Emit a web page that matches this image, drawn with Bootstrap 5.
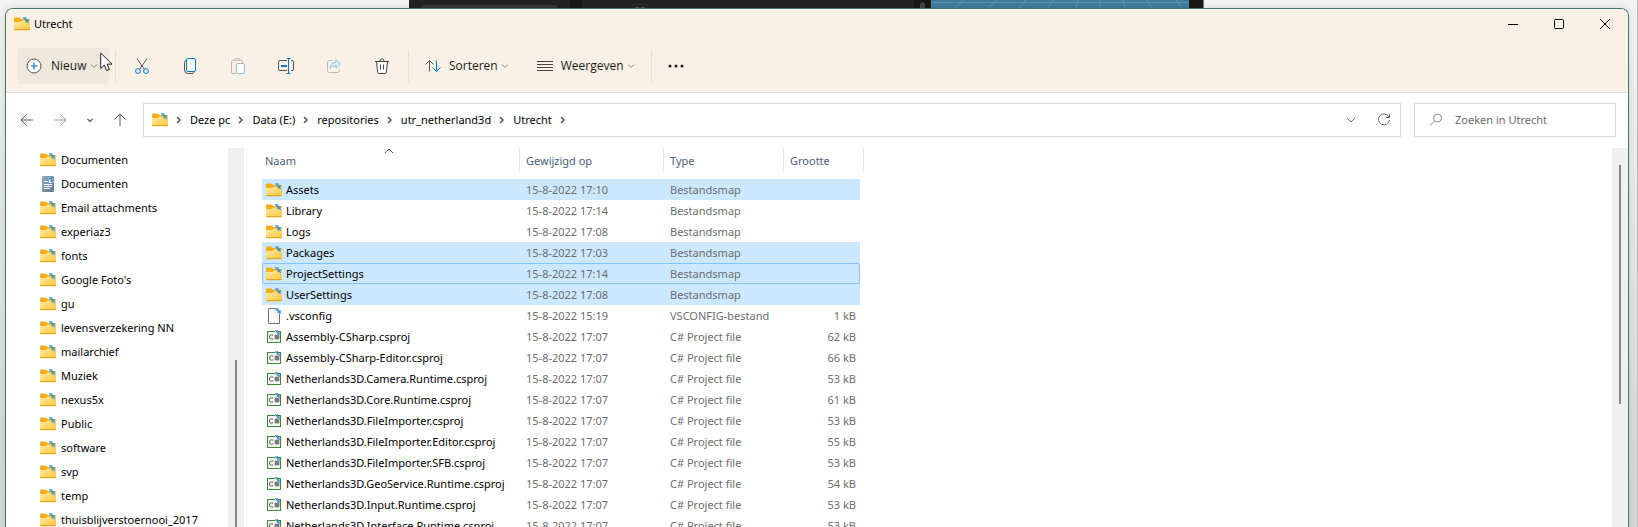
<!DOCTYPE html>
<html lang="nl">
<head>
<meta charset="utf-8">
<meta name="viewport" content="width=device-width, initial-scale=1">
<title>Utrecht</title>
<link href="https://cdn.jsdelivr.net/npm/bootstrap@5.3.0/dist/css/bootstrap.min.css" rel="stylesheet">
<style>
  body { font-family: "Noto Sans", "Open Sans", sans-serif; font-size: 11px; line-height: 16px; color: #000; background: linear-gradient(#f3f3f3, #d6d6d6); }
  svg { display: block; flex: none; }
  button, input { font: inherit; }
  .desktop { border-right: 1px solid #bdbdbd; padding: 0 8px 0 5px; }
  .behind { position: absolute; top: 0; left: 25%; width: 795px; height: 9px; }
  .explorer { position: relative; margin-top: 8px; background: #fff; border: 1px solid #47796b; border-bottom: 0; border-radius: 8px 8px 0 0; box-shadow: 0 0 8px rgba(0,0,0,.12); min-height: 0; }
  .chrome { background: #f9f1e5; border-bottom: 1px solid #e5ddd2; border-radius: 7px 7px 0 0; height: 84px; }
  .titlebar { height: 29px; padding-left: 8px; }
  .titlebar .caption-btn { width: 46px; height: 28px; }
  .tool-row { padding: 10px 11px; font-family: "Open Sans", sans-serif; font-size: 12px; }
  .plain { border: 0; background: none; padding: 0; color: #1b1b1b; display: flex; align-items: center; justify-content: center; }
  .new-btn { width: 92px; height: 36px; padding-left: 9px; border-radius: 4px; background: #efe8dd; gap: 9px; justify-content: flex-start; }
  .icon-btn { width: 48px; height: 36px; }
  .menu-btn { height: 36px; gap: 8px; }
  .menu-btn + .menu-btn { margin-left: 28px; }
  .chev { color: #8d8880; margin-left: -5px; }
  .rule-v { width: 1px; height: 31px; background: #e8e0d5; }
  .rule-a { margin: 0 2px 0 6px; }
  .rule-b { margin: 0 16px 0 2px; }
  .address-row { padding: 10px 12px 11px 10px; gap: 13px; }
  .nav-set { width: 114px; padding-left: 4px; gap: 19px; }
  .path-box, .find-box { height: 34px; border: 1px solid #d9d9d9; }
  .path-box { padding: 0 9px 0 8px; }
  .path-box a { color: #000; text-decoration: none; }
  .path-tools { gap: 21px; }
  .crumbs li { display: flex; align-items: center; }
  .crumbs .sep { margin: 0 8px; }
  .find-box { width: 202px; padding-left: 14px; gap: 12px; }
  .find-box input { border: 0; outline: 0; padding: 0; width: 140px; color: #6b6b6b; }
  .find-box input::placeholder { color: #6b6b6b; opacity: 1; }
  .panes { min-height: 0; }
  .tree { width: 222px; overflow: hidden; }
  .tree a { height: 24px; padding-left: 34px; gap: 5px; color: #000; text-decoration: none; white-space: nowrap; }
  .track { width: 16px; background: #f0f0f0; flex: none; position: relative; }
  .thumb { position: absolute; left: 7px; width: 2px; background: #868686; }
  .splitter { width: 1px; margin: 0 15px 0 2px; background: #f5f5f5; flex: none; }
  .files { width: 598px; table-layout: fixed; border-collapse: separate; border-spacing: 0; color: #6d6d6d; }
  .files th { position: relative; height: 31px; padding: 5px 0 0 7px; vertical-align: top; font-weight: 400; color: #4c607a; }
  .files th::after { content: ""; position: absolute; top: 0; right: -1px; width: 1px; height: 25px; background: #e5e5e5; }
  .files th:first-child { padding-left: 3px; }
  .files th:last-child::after { right: -4px; }
  .files th svg { position: absolute; top: 0; left: 122px; }
  .files td { height: 21px; padding: 0 4px 0 7px; white-space: nowrap; }
  .files td:first-child { padding-left: 4px; }
  .files td:last-child { text-align: right; }
  .files .entry { display: flex; align-items: center; gap: 4px; color: #000; }
  .files .picked td { background: #cce8ff; }
  .files .focused { outline: 1px solid #83c5fb; outline-offset: -1px; border-radius: 2px; }
  .pointer { position: absolute; left: 94px; top: 43px; }
</style>
</head>
<body>
<svg width="0" height="0" class="position-absolute" aria-hidden="true">
  <defs>
    <linearGradient id="gold" x1="0" y1="0" x2="1" y2="1"><stop offset="0" stop-color="#ffeaa6"/><stop offset="1" stop-color="#fdc635"/></linearGradient>
    <linearGradient id="slate" x1="0" y1="0" x2="1" y2="1"><stop offset="0" stop-color="#95abc2"/><stop offset="1" stop-color="#5b7997"/></linearGradient>
    <symbol id="sync" viewBox="0 0 7 7"><path d="M0 0h3v3H0zM4 4h3v3H4z" fill="#a9d8f2"/><path d="M1 0l2 2V0h1v3H1V2h1L0 1zM6 7L4 5v1H3V3h4v1H5l2 2z" fill="#2f86bd"/></symbol>
    <symbol id="folder" viewBox="0 0 16 16"><path d="M0 2.500q0-1 1-1h4.500l2 1.500H15q1 0 1 1V8H0z" fill="#f5ae13"/><path d="M0 6h6l2-1.500h8V13q0 1-1 1H1q-1 0-1-1z" fill="url(#gold)"/><path d="M0 13q0 1.300 1 1.300h14q1 0 1-1.300z" fill="#e8a61c"/><use href="#sync" x="9" y="1" width="6" height="6"/></symbol>
    <symbol id="doc" viewBox="0 0 16 16"><rect x="2" width="12" height="16" rx="1" fill="url(#slate)"/><path d="M4 5.500h4M4 8.500h8M4 10.500h8M4 12.500h6" stroke="#fff"/><path d="M9 3h4v4H9z" fill="#fff"/><use href="#sync" x="8" y="1" width="6" height="6"/></symbol>
    <symbol id="blank" viewBox="0 0 16 16"><path d="M2.500.5h8l3 3v12h-11z" fill="#fafafa" stroke="#707070"/><use href="#sync" x="9" y="0" width="6" height="6"/></symbol>
    <symbol id="csproj" viewBox="0 0 16 16"><rect x="1.500" y="2.500" width="13" height="11" fill="#f5f5f5" stroke="#388a34"/><path d="M7.200 6.200Q3.500 5 3.500 8t3.700 1.800M10 5.500v5M12 5.500v5M8.500 7h5M8.500 9h5" fill="none" stroke="#444" stroke-width=".9"/><use href="#sync" x="9" y="1" width="5" height="5"/></symbol>
    <symbol id="down" viewBox="0 0 8 8"><path d="M1 2.500l3 3 3-3" fill="none" stroke="currentColor"/></symbol>
    <symbol id="right" viewBox="0 0 6 8"><path d="M1 1l3 3-3 3" fill="none" stroke="#555" stroke-width="1.500"/></symbol>
  </defs>
</svg>

<div class="desktop vh-100 d-flex flex-column overflow-hidden position-relative">
  <!-- Strip of the editor window that sticks out above the explorer -->
  <svg class="behind" viewBox="0 0 795 9" aria-hidden="true">
    <path fill="#232323" d="M0 0h795v9H0z"/><rect x="12" y="5" width="136" height="6" rx="2" fill="#383838"/>
    <path fill="#191919" d="M161 0h12v9h-12zM505 0h16v9h-16zM780 0h14v9h-14z"/><path d="M226 7.500h4m2 0h4" stroke="#555"/>
    <rect x="511" y="2" width="5" height="9" rx="2.500" fill="#444"/>
    <path fill="#417da0" d="M522 0h258v9H522z"/>
    <path d="M522 2.500h258M555 0l-11 9M588 0l-10 9M617 0l-8 9M644 0l-6 9M669 0l-2 9M691 0v9M714 0l2 9M738 0l5 9M767 0l6 9" stroke="#6b9cb8" stroke-opacity=".7" fill="none"/>
    <path fill="#777" d="M794 0h1v9h-1z"/>
  </svg>

  <main class="explorer flex-grow-1 d-flex flex-column">
    <header class="chrome">
      <div class="titlebar d-flex align-items-center">
        <svg width="16" height="16"><use href="#folder"/></svg>
        <span class="ms-1">Utrecht</span>
        <div class="ms-auto d-flex">
          <button class="plain caption-btn" aria-label="Minimaliseren"><svg width="10" height="10"><path d="M0 5.500h10" stroke="#000"/></svg></button>
          <button class="plain caption-btn" aria-label="Maximaliseren"><svg width="10" height="10"><rect x=".5" y=".5" width="9" height="9" rx="1" fill="none" stroke="#000"/></svg></button>
          <button class="plain caption-btn" aria-label="Sluiten"><svg width="10" height="10"><path d="M0 0l10 10M10 0L0 10" stroke="#000"/></svg></button>
        </div>
      </div>
      <div class="tool-row d-flex align-items-center">
        <button class="plain new-btn">
          <svg width="16" height="16" fill="none"><circle cx="8" cy="8" r="7" fill="#fff" stroke="#555"/><path d="M8 4.500v7M4.500 8h7" stroke="#0078d4" stroke-width="1.200"/></svg>
          <span>Nieuw</span>
          <svg class="chev" width="8" height="8"><use href="#down"/></svg>
        </button>
        <span class="rule-v rule-a"></span>
        <button class="plain icon-btn" aria-label="Knippen"><svg width="16" height="16" fill="none"><path d="M3 .5l7.500 11M13 .5L5.500 11.500" stroke="#555"/><circle cx="4" cy="13" r="2.400" stroke="#0078d4"/><circle cx="12" cy="13" r="2.400" stroke="#0078d4"/></svg></button>
        <button class="plain icon-btn" aria-label="Kopiëren"><svg width="16" height="16" fill="none"><path d="M4 2.500q-1.500.3-1.500 2V12q0 3.500 3.500 3.500h4q1.600 0 2-1.500" stroke="#555"/><rect x="4.500" y=".5" width="9" height="13" rx="1.500" fill="#fff" stroke="#0078d4"/></svg></button>
        <button class="plain icon-btn" aria-label="Plakken"><svg width="16" height="16" fill="none"><path d="M6 15.500H3q-1.500 0-1.500-1.500V3.500Q1.500 2 3 2h1.500M9.500 2H11q1.500 0 1.500 1.500V5M4.500 1.500q0-1 1-1h3q1 0 1 1v1h-5z" stroke="#bdb8b0"/><rect x="6.500" y="5.500" width="8" height="10" rx="1.500" fill="#fff" stroke="#94bfdc"/></svg></button>
        <button class="plain icon-btn" aria-label="Naam wijzigen"><svg width="16" height="16" fill="none"><path d="M9 2.500H2Q.5 2.500.5 4v7q0 1.500 1.500 1.500h7M13 2.500h1q1.500 0 1.500 1.500v7q0 1.500-1.500 1.500h-1" stroke="#555"/><path d="M3 8h6" stroke="#0078d4" stroke-width="2"/><path d="M10.500.5v15M8.500.5h4M8.500 15.500h4" stroke="#0078d4"/></svg></button>
        <button class="plain icon-btn" aria-label="Delen"><svg width="16" height="16" fill="none"><path d="M6 2.500H3.500Q1.500 2.500 1.500 4.500v8q0 2 2 2h8q2 0 2-2v-1" stroke="#bdb8b0"/><path d="M10 1.500L14.500 6 10 10V7.800Q6 7.500 4 10.500 4.500 4.500 10 4z" fill="#e3eef3" stroke="#94bfdc"/></svg></button>
        <button class="plain icon-btn" aria-label="Verwijderen"><svg width="16" height="16" fill="none" stroke="#444"><path d="M2.500 3.500l1.200 11q.1 1 1 1h6.600q.9 0 1-1l1.200-11" fill="#fff"/><path d="M1 3.500h14M6 3.200Q6 .8 8 .8t2 2.400M6.500 6.500v5M9.500 6.500v5"/></svg></button>
        <span class="rule-v rule-b"></span>
        <button class="plain menu-btn"><svg width="16" height="16" fill="none"><path d="M4.500 2.500v11M.5 6.500l4-4 4 4" stroke="#555"/><path d="M11.500 2.500v11M7.500 9.500l4 4 4-4" stroke="#0078d4"/></svg><span>Sorteren</span><svg class="chev" width="8" height="8"><use href="#down"/></svg></button>
        <button class="plain menu-btn"><svg width="16" height="16"><path d="M0 3.500h16M0 6.500h16M0 9.500h16M0 12.500h16" stroke="#444"/></svg><span>Weergeven</span><svg class="chev" width="8" height="8"><use href="#down"/></svg></button>
        <span class="rule-v mx-3"></span>
        <button class="plain menu-btn" aria-label="Meer weergeven"><svg width="16" height="4" fill="#1b1b1b"><circle cx="2" cy="2" r="1.500"/><circle cx="8" cy="2" r="1.500"/><circle cx="14" cy="2" r="1.500"/></svg></button>
      </div>
    </header>

    <div class="address-row d-flex align-items-center">
      <nav class="nav-set d-flex align-items-center" aria-label="Navigatie">
        <button class="plain" aria-label="Vorige"><svg width="14" height="14" fill="none" stroke="#555"><path d="M1 7h12M6.500 1.500L1 7l5.500 5.500"/></svg></button>
        <button class="plain" aria-label="Volgende"><svg width="14" height="14" fill="none" stroke="#999"><path d="M1 7h12M7.500 1.500L13 7l-5.500 5.500"/></svg></button>
        <button class="plain" aria-label="Recente locaties"><svg width="8" height="8" fill="none" stroke="#555"><path d="M1.500 3L4 5.500 6.500 3" stroke-width="1.200"/></svg></button>
        <button class="plain" aria-label="Omhoog"><svg width="14" height="14" fill="none" stroke="#555"><path d="M7 13V1M1.500 6.500L7 1l5.500 5.500"/></svg></button>
      </nav>
      <div class="path-box flex-grow-1 d-flex align-items-center">
        <svg width="16" height="16"><use href="#folder"/></svg>
        <ol class="crumbs list-unstyled d-flex mb-0">
          <li><svg class="sep" width="6" height="8"><use href="#right"/></svg><a href="#">Deze pc</a></li>
          <li><svg class="sep" width="6" height="8"><use href="#right"/></svg><a href="#">Data (E:)</a></li>
          <li><svg class="sep" width="6" height="8"><use href="#right"/></svg><a href="#">repositories</a></li>
          <li><svg class="sep" width="6" height="8"><use href="#right"/></svg><a href="#">utr_netherland3d</a></li>
          <li><svg class="sep" width="6" height="8"><use href="#right"/></svg><a href="#">Utrecht</a><svg class="sep" width="6" height="8"><use href="#right"/></svg></li>
        </ol>
        <div class="path-tools d-flex align-items-center ms-auto">
          <button class="plain" aria-label="Vorige locaties"><svg width="10" height="10" fill="none" stroke="#666"><path d="M1 3l4 4 4-4"/></svg></button>
          <button class="plain" aria-label="Vernieuwen"><svg width="14" height="14" fill="none" stroke="#666"><path d="M12 4A5.500 5.500 0 1 0 12.500 7M12.500 1v3.500H9"/></svg></button>
        </div>
      </div>
      <div class="find-box d-flex align-items-center">
        <svg width="14" height="14" fill="none" stroke="#8a8a94"><circle cx="8.500" cy="5" r="4"/><path d="M5.500 8L1 12.500"/></svg>
        <input type="text" placeholder="Zoeken in Utrecht" aria-label="Zoeken in Utrecht">
      </div>
    </div>

    <div class="panes flex-grow-1 d-flex overflow-hidden">
      <nav class="tree flex-shrink-0" aria-label="Mappen">
        <a class="d-flex align-items-center" href="#"><svg width="16" height="16"><use href="#folder"/></svg>Documenten</a>
        <a class="d-flex align-items-center" href="#"><svg width="16" height="16"><use href="#doc"/></svg>Documenten</a>
        <a class="d-flex align-items-center" href="#"><svg width="16" height="16"><use href="#folder"/></svg>Email attachments</a>
        <a class="d-flex align-items-center" href="#"><svg width="16" height="16"><use href="#folder"/></svg>experiaz3</a>
        <a class="d-flex align-items-center" href="#"><svg width="16" height="16"><use href="#folder"/></svg>fonts</a>
        <a class="d-flex align-items-center" href="#"><svg width="16" height="16"><use href="#folder"/></svg>Google Foto's</a>
        <a class="d-flex align-items-center" href="#"><svg width="16" height="16"><use href="#folder"/></svg>gu</a>
        <a class="d-flex align-items-center" href="#"><svg width="16" height="16"><use href="#folder"/></svg>levensverzekering NN</a>
        <a class="d-flex align-items-center" href="#"><svg width="16" height="16"><use href="#folder"/></svg>mailarchief</a>
        <a class="d-flex align-items-center" href="#"><svg width="16" height="16"><use href="#folder"/></svg>Muziek</a>
        <a class="d-flex align-items-center" href="#"><svg width="16" height="16"><use href="#folder"/></svg>nexus5x</a>
        <a class="d-flex align-items-center" href="#"><svg width="16" height="16"><use href="#folder"/></svg>Public</a>
        <a class="d-flex align-items-center" href="#"><svg width="16" height="16"><use href="#folder"/></svg>software</a>
        <a class="d-flex align-items-center" href="#"><svg width="16" height="16"><use href="#folder"/></svg>svp</a>
        <a class="d-flex align-items-center" href="#"><svg width="16" height="16"><use href="#folder"/></svg>temp</a>
        <a class="d-flex align-items-center" href="#"><svg width="16" height="16"><use href="#folder"/></svg>thuisblijverstoernooi_2017</a>
      </nav>
      <div class="track"><div class="thumb" style="top:56%;bottom:0"></div></div>
      <div class="splitter"></div>
      <section class="flex-grow-1 overflow-hidden">
        <table class="files">
          <colgroup><col style="width:257px"><col style="width:144px"><col style="width:120px"><col style="width:77px"></colgroup>
          <thead><tr><th>Naam<svg width="10" height="6" fill="none"><path d="M1 5l4-4 4 4" stroke="#555"/></svg></th><th>Gewijzigd op</th><th>Type</th><th>Grootte</th></tr></thead>
          <tbody>
            <tr class="picked"><td><span class="entry"><svg width="16" height="16"><use href="#folder"/></svg>Assets</span></td><td>15-8-2022 17:10</td><td>Bestandsmap</td><td></td></tr>
            <tr><td><span class="entry"><svg width="16" height="16"><use href="#folder"/></svg>Library</span></td><td>15-8-2022 17:14</td><td>Bestandsmap</td><td></td></tr>
            <tr><td><span class="entry"><svg width="16" height="16"><use href="#folder"/></svg>Logs</span></td><td>15-8-2022 17:08</td><td>Bestandsmap</td><td></td></tr>
            <tr class="picked"><td><span class="entry"><svg width="16" height="16"><use href="#folder"/></svg>Packages</span></td><td>15-8-2022 17:03</td><td>Bestandsmap</td><td></td></tr>
            <tr class="picked focused"><td><span class="entry"><svg width="16" height="16"><use href="#folder"/></svg>ProjectSettings</span></td><td>15-8-2022 17:14</td><td>Bestandsmap</td><td></td></tr>
            <tr class="picked"><td><span class="entry"><svg width="16" height="16"><use href="#folder"/></svg>UserSettings</span></td><td>15-8-2022 17:08</td><td>Bestandsmap</td><td></td></tr>
            <tr><td><span class="entry"><svg width="16" height="16"><use href="#blank"/></svg>.vsconfig</span></td><td>15-8-2022 15:19</td><td>VSCONFIG-bestand</td><td>1 kB</td></tr>
            <tr><td><span class="entry"><svg width="16" height="16"><use href="#csproj"/></svg>Assembly-CSharp.csproj</span></td><td>15-8-2022 17:07</td><td>C# Project file</td><td>62 kB</td></tr>
            <tr><td><span class="entry"><svg width="16" height="16"><use href="#csproj"/></svg>Assembly-CSharp-Editor.csproj</span></td><td>15-8-2022 17:07</td><td>C# Project file</td><td>66 kB</td></tr>
            <tr><td><span class="entry"><svg width="16" height="16"><use href="#csproj"/></svg>Netherlands3D.Camera.Runtime.csproj</span></td><td>15-8-2022 17:07</td><td>C# Project file</td><td>53 kB</td></tr>
            <tr><td><span class="entry"><svg width="16" height="16"><use href="#csproj"/></svg>Netherlands3D.Core.Runtime.csproj</span></td><td>15-8-2022 17:07</td><td>C# Project file</td><td>61 kB</td></tr>
            <tr><td><span class="entry"><svg width="16" height="16"><use href="#csproj"/></svg>Netherlands3D.FileImporter.csproj</span></td><td>15-8-2022 17:07</td><td>C# Project file</td><td>53 kB</td></tr>
            <tr><td><span class="entry"><svg width="16" height="16"><use href="#csproj"/></svg>Netherlands3D.FileImporter.Editor.csproj</span></td><td>15-8-2022 17:07</td><td>C# Project file</td><td>55 kB</td></tr>
            <tr><td><span class="entry"><svg width="16" height="16"><use href="#csproj"/></svg>Netherlands3D.FileImporter.SFB.csproj</span></td><td>15-8-2022 17:07</td><td>C# Project file</td><td>53 kB</td></tr>
            <tr><td><span class="entry"><svg width="16" height="16"><use href="#csproj"/></svg>Netherlands3D.GeoService.Runtime.csproj</span></td><td>15-8-2022 17:07</td><td>C# Project file</td><td>54 kB</td></tr>
            <tr><td><span class="entry"><svg width="16" height="16"><use href="#csproj"/></svg>Netherlands3D.Input.Runtime.csproj</span></td><td>15-8-2022 17:07</td><td>C# Project file</td><td>53 kB</td></tr>
            <tr><td><span class="entry"><svg width="16" height="16"><use href="#csproj"/></svg>Netherlands3D.Interface.Runtime.csproj</span></td><td>15-8-2022 17:07</td><td>C# Project file</td><td>53 kB</td></tr>
          </tbody>
        </table>
      </section>
      <div class="track"><div class="thumb" style="top:17px;height:63%"></div></div>
    </div>
    <svg class="pointer" width="13" height="20" aria-hidden="true"><path d="M.7 1v15.500l3.600-3.400 2.400 5.500 2.800-1.200-2.400-5.300H12z" fill="#fff" stroke="#222"/></svg>
  </main>
</div>
<script src="https://cdn.jsdelivr.net/npm/bootstrap@5.3.0/dist/js/bootstrap.bundle.min.js"></script>
</body>
</html>
